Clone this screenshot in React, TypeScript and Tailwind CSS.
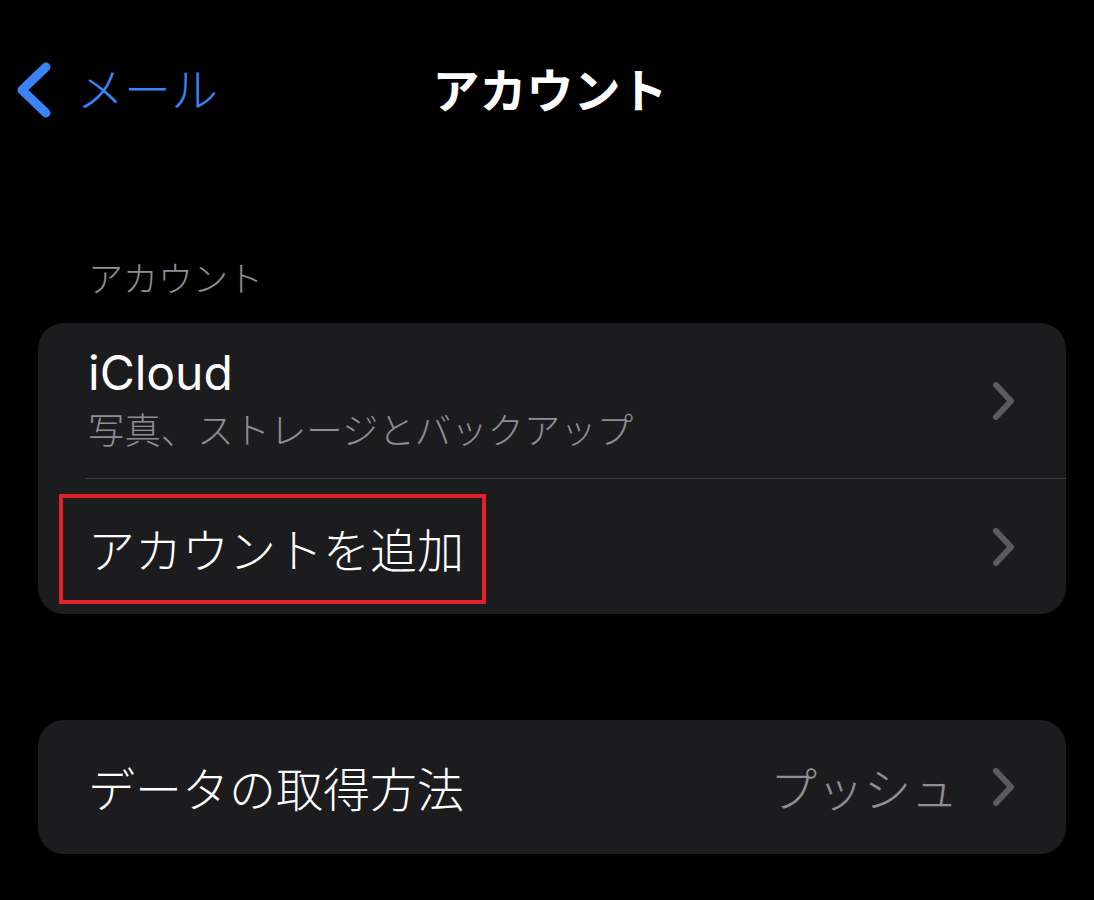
import React from "react";

const font = { fontFamily: '"Inter", "Noto Sans CJK JP", sans-serif' };

function Chevron() {
  return (
    <svg width="24" height="40" viewBox="0 0 24 40" className="shrink-0">
      <polyline
        points="4,4 19,20 4,36"
        fill="none"
        stroke="#5b5b5f"
        strokeWidth="6"
        strokeLinecap="round"
        strokeLinejoin="round"
      />
    </svg>
  );
}

export default function App() {
  return (
    <div
      className="w-[1094px] h-[900px] bg-black text-white overflow-hidden flex flex-col"
      style={font}
    >
      {/* Nav */}
      <div className="relative h-[184px] flex items-center justify-center">
        <div className="absolute left-[13px] top-[58px] flex items-center">
          <svg width="42" height="64" viewBox="0 0 42 64">
            <polyline
              points="33,9 9,32 33,55"
              fill="none"
              stroke="#3a82f6"
              strokeWidth="9"
              strokeLinecap="round"
              strokeLinejoin="round"
            />
          </svg>
          <span className="ml-[22px] text-[47px] font-light leading-[64px] text-[#3a82f6]">
            メール
          </span>
        </div>
        <span className="text-[47px] font-bold leading-[64px] ml-[6px] -mt-[2px]">
          アカウント
        </span>
      </div>

      {/* Section header */}
      <div className="pt-[73px] pl-[88px] text-[35px] font-light leading-[44px] text-[#8e8e93]">
        アカウント
      </div>

      {/* Card 1 */}
      <div className="mt-[22px] mx-[38px] w-[1028px] rounded-[26px] bg-[#1c1c1e]">
        <div className="h-[155px] flex items-center pl-[50px] pr-[50px]">
          <div className="flex-1 flex flex-col">
            <span className="text-[48px] leading-[56px]">iCloud</span>
            <span className="mt-[5px] text-[36.4px] font-light leading-[50px] text-[#8e8e93]">
              写真、ストレージとバックアップ
            </span>
          </div>
          <Chevron />
        </div>
        <div className="ml-[47px] h-[1px] bg-[#3d3d40]" />
        <div className="relative h-[135px] flex items-center pl-[50px] pr-[50px]">
          <span className="flex-1 text-[47px] font-light leading-[60px] mt-[8px]">
            アカウントを追加
          </span>
          <Chevron />
          <div className="absolute left-[21px] top-[15px] w-[427px] h-[110px] border-[4px] border-[#e3202b]" />
        </div>
      </div>

      {/* Card 2 */}
      <div className="mt-[106px] mx-[38px] w-[1028px] h-[134px] rounded-[26px] bg-[#1c1c1e] flex items-center pl-[50px] pr-[50px]">
        <span className="flex-1 text-[47px] font-light leading-[60px] mt-[6px]">
          データの取得方法
        </span>
        <span className="text-[47px] font-light leading-[60px] text-[#8e8e93] mr-[34px] mt-[6px]">
          プッシュ
        </span>
        <Chevron />
      </div>
    </div>
  );
}
